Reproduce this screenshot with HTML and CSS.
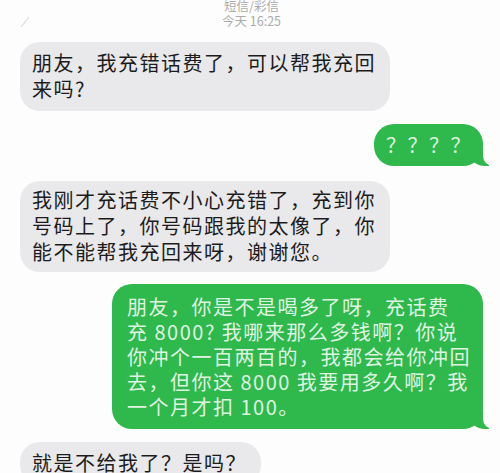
FILE: index.html
```html
<!DOCTYPE html>
<html lang="zh">
<head>
<meta charset="utf-8">
<link rel="stylesheet" href="styles.css">
</head>
<body>
<div class="chat">
  <div class="header">
    <svg class="mark" width="10" height="12" viewBox="0 0 10 12"><path d="M1 11 L9 1" stroke="#d8d8d8" stroke-width="1.2" fill="none"/></svg>
    <div class="kind">短信/彩信</div>
    <div class="time">今天 16:25</div>
  </div>
  <div class="msg recv b1">朋友，我充错话费了，可以帮我充回<br>来吗?</div>
  <div class="msg sent b2">？？？？</div>
  <div class="msg recv b3">我刚才充话费不小心充错了，充到你<br>号码上了，你号码跟我的太像了，你<br>能不能帮我充回来呀，谢谢您。</div>
  <div class="msg sent b4">朋友，你是不是喝多了呀，充话费<br>充 8000? 我哪来那么多钱啊？你说<br>你冲个一百两百的，我都会给你冲回<br>去，但你这 8000 我要用多久啊？我<br>一个月才扣 100。</div>
  <div class="msg recv b5">就是不给我了？是吗？</div>
</div>
</body>
</html>
```
FILE: styles.css
```css
html, body {
  margin: 0;
  padding: 0;
  background: #fdfdfd;
  overflow: hidden;
}
.chat {
  display: flex;
  flex-direction: column;
  padding: 0 17px 0 20px;
  font-family: "Noto Sans CJK SC", "Noto Sans", sans-serif;
}
.header {
  position: relative;
  margin-top: -2px;
  text-align: center;
  color: #ababab;
  font-size: 12.5px;
  line-height: 15px;
  margin-bottom: 14px;
}
.mark {
  position: absolute;
  left: 0;
  top: 18px;
}
.msg {
  position: relative;
  font-size: 20px;
  letter-spacing: 1.5px;
  line-height: 26px;
  border-radius: 20px;
  margin-bottom: 13px;
}
.recv {
  align-self: flex-start;
  background: #e9e9eb;
  color: #1c1c1c;
  padding: 8px 14px 9px 12px;
}
.sent {
  align-self: flex-end;
  background: #2fb84c;
  color: #dff3e2;
  padding: 8px 12px 8px 15px;
}
.sent::before {
  content: "";
  position: absolute;
  right: -6px;
  bottom: 0;
  width: 20px;
  height: 18px;
  background: #2fb84c;
  border-bottom-left-radius: 16px 14px;
}
.sent::after {
  content: "";
  position: absolute;
  right: -26px;
  bottom: 0;
  width: 26px;
  height: 20px;
  background: #fdfdfd;
  border-bottom-left-radius: 10px;
}
.b2 {
  padding: 8px 11px 8px 12px;
  margin-bottom: 15px;
}
.b3 {
  padding-top: 6px;
  padding-bottom: 7px;
  margin-bottom: 12px;
}
.b4 {
  line-height: 25px;
  padding-top: 10px;
  padding-bottom: 10px;
}
```
